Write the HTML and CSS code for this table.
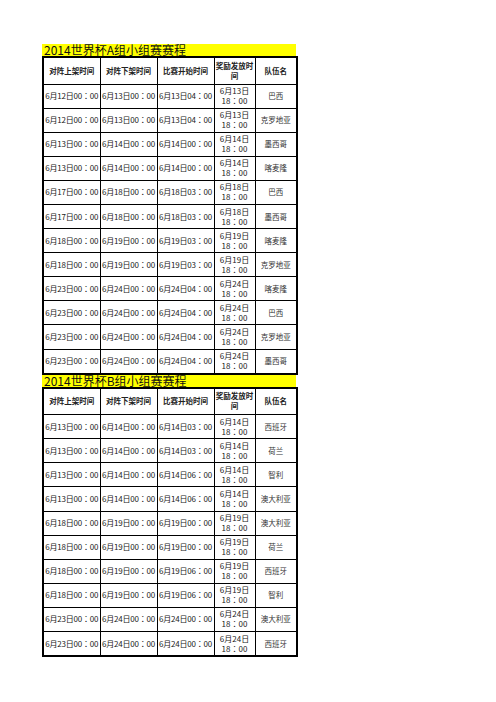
FILE: index.html
```html
<!DOCTYPE html>
<html>
<head>
<meta charset="utf-8">
<link rel="stylesheet" href="styles.css">
</head>
<body>
<div class="page">
  <div class="title">2014世界杯A组小组赛赛程</div>
  <table class="sched">
    <colgroup><col class="c1"><col class="c2"><col class="c3"><col class="c4"><col class="c5"></colgroup>
    <thead>
      <tr><th>对阵上架时间</th><th>对阵下架时间</th><th>比赛开始时间</th><th>奖励发放时间</th><th>队伍名</th></tr>
    </thead>
    <tbody>
      <tr><td>6月12日00：00</td><td>6月13日00：00</td><td>6月13日04：00</td><td class="rw">6月13日<br>18：00</td><td class="tm">巴西</td></tr>
      <tr><td>6月12日00：00</td><td>6月13日00：00</td><td>6月13日04：00</td><td class="rw">6月13日<br>18：00</td><td class="tm">克罗地亚</td></tr>
      <tr><td>6月13日00：00</td><td>6月14日00：00</td><td>6月14日00：00</td><td class="rw">6月14日<br>18：00</td><td class="tm">墨西哥</td></tr>
      <tr><td>6月13日00：00</td><td>6月14日00：00</td><td>6月14日00：00</td><td class="rw">6月14日<br>18：00</td><td class="tm">喀麦隆</td></tr>
      <tr><td>6月17日00：00</td><td>6月18日00：00</td><td>6月18日03：00</td><td class="rw">6月18日<br>18：00</td><td class="tm">巴西</td></tr>
      <tr><td>6月17日00：00</td><td>6月18日00：00</td><td>6月18日03：00</td><td class="rw">6月18日<br>18：00</td><td class="tm">墨西哥</td></tr>
      <tr><td>6月18日00：00</td><td>6月19日00：00</td><td>6月19日03：00</td><td class="rw">6月19日<br>18：00</td><td class="tm">喀麦隆</td></tr>
      <tr><td>6月18日00：00</td><td>6月19日00：00</td><td>6月19日03：00</td><td class="rw">6月19日<br>18：00</td><td class="tm">克罗地亚</td></tr>
      <tr><td>6月23日00：00</td><td>6月24日00：00</td><td>6月24日04：00</td><td class="rw">6月24日<br>18：00</td><td class="tm">喀麦隆</td></tr>
      <tr><td>6月23日00：00</td><td>6月24日00：00</td><td>6月24日04：00</td><td class="rw">6月24日<br>18：00</td><td class="tm">巴西</td></tr>
      <tr><td>6月23日00：00</td><td>6月24日00：00</td><td>6月24日04：00</td><td class="rw">6月24日<br>18：00</td><td class="tm">克罗地亚</td></tr>
      <tr><td>6月23日00：00</td><td>6月24日00：00</td><td>6月24日04：00</td><td class="rw">6月24日<br>18：00</td><td class="tm">墨西哥</td></tr>
    </tbody>
  </table>
  <div class="title">2014世界杯B组小组赛赛程</div>
  <table class="sched">
    <colgroup><col class="c1"><col class="c2"><col class="c3"><col class="c4"><col class="c5"></colgroup>
    <thead>
      <tr><th>对阵上架时间</th><th>对阵下架时间</th><th>比赛开始时间</th><th>奖励发放时间</th><th>队伍名</th></tr>
    </thead>
    <tbody>
      <tr><td>6月13日00：00</td><td>6月14日00：00</td><td>6月14日03：00</td><td class="rw">6月14日<br>18：00</td><td class="tm">西班牙</td></tr>
      <tr><td>6月13日00：00</td><td>6月14日00：00</td><td>6月14日03：00</td><td class="rw">6月14日<br>18：00</td><td class="tm">荷兰</td></tr>
      <tr><td>6月13日00：00</td><td>6月14日00：00</td><td>6月14日06：00</td><td class="rw">6月14日<br>18：00</td><td class="tm">智利</td></tr>
      <tr><td>6月13日00：00</td><td>6月14日00：00</td><td>6月14日06：00</td><td class="rw">6月14日<br>18：00</td><td class="tm">澳大利亚</td></tr>
      <tr><td>6月18日00：00</td><td>6月19日00：00</td><td>6月19日00：00</td><td class="rw">6月19日<br>18：00</td><td class="tm">澳大利亚</td></tr>
      <tr><td>6月18日00：00</td><td>6月19日00：00</td><td>6月19日00：00</td><td class="rw">6月19日<br>18：00</td><td class="tm">荷兰</td></tr>
      <tr><td>6月18日00：00</td><td>6月19日00：00</td><td>6月19日06：00</td><td class="rw">6月19日<br>18：00</td><td class="tm">西班牙</td></tr>
      <tr><td>6月18日00：00</td><td>6月19日00：00</td><td>6月19日06：00</td><td class="rw">6月19日<br>18：00</td><td class="tm">智利</td></tr>
      <tr><td>6月23日00：00</td><td>6月24日00：00</td><td>6月24日00：00</td><td class="rw">6月24日<br>18：00</td><td class="tm">澳大利亚</td></tr>
      <tr><td>6月23日00：00</td><td>6月24日00：00</td><td>6月24日00：00</td><td class="rw">6月24日<br>18：00</td><td class="tm">西班牙</td></tr>
    </tbody>
  </table>
</div>
</body>
</html>
```
FILE: styles.css
```css
html, body {
  margin: 0;
  padding: 0;
  background: #fff;
}
body {
  font-family: "Noto Sans CJK SC", "Noto Sans", sans-serif;
  color: #222;
}
.page {
  padding: 44px 0 0 42px;
  width: 254px;
}
.title {
  background: #ffff00;
  height: 12px;
  font-size: 12px;
  line-height: 12px;
  color: #111;
  white-space: nowrap;
  padding-left: 2px;
}
.sched {
  width: 254px;
  table-layout: fixed;
  border-collapse: collapse;
  border: 2px solid #000;
}
.c1, .c2, .c3 { width: 57px; }
.c4 { width: 41px; }
.c5 { width: 42px; }
.sched th, .sched td {
  border: 1px solid #000;
  padding: 0;
  text-align: center;
  vertical-align: middle;
  overflow: hidden;
  white-space: nowrap;
}
.sched th {
  height: 25.5px;
  font-size: 7.5px;
  line-height: 10px;
  font-weight: bold;
  white-space: normal;
  padding: 0 1px;
}
.sched td {
  height: 23.1px;
  font-family: "Noto Sans CJK JP", "Noto Sans CJK SC", sans-serif;
  font-size: 8px;
  line-height: 10px;
  letter-spacing: -0.2px;
}
.sched td.rw {
  letter-spacing: 0;
}
.sched td.tm {
  font-family: "Noto Sans CJK SC", sans-serif;
  font-size: 7.5px;
  color: #333;
  letter-spacing: 0;
}
```
